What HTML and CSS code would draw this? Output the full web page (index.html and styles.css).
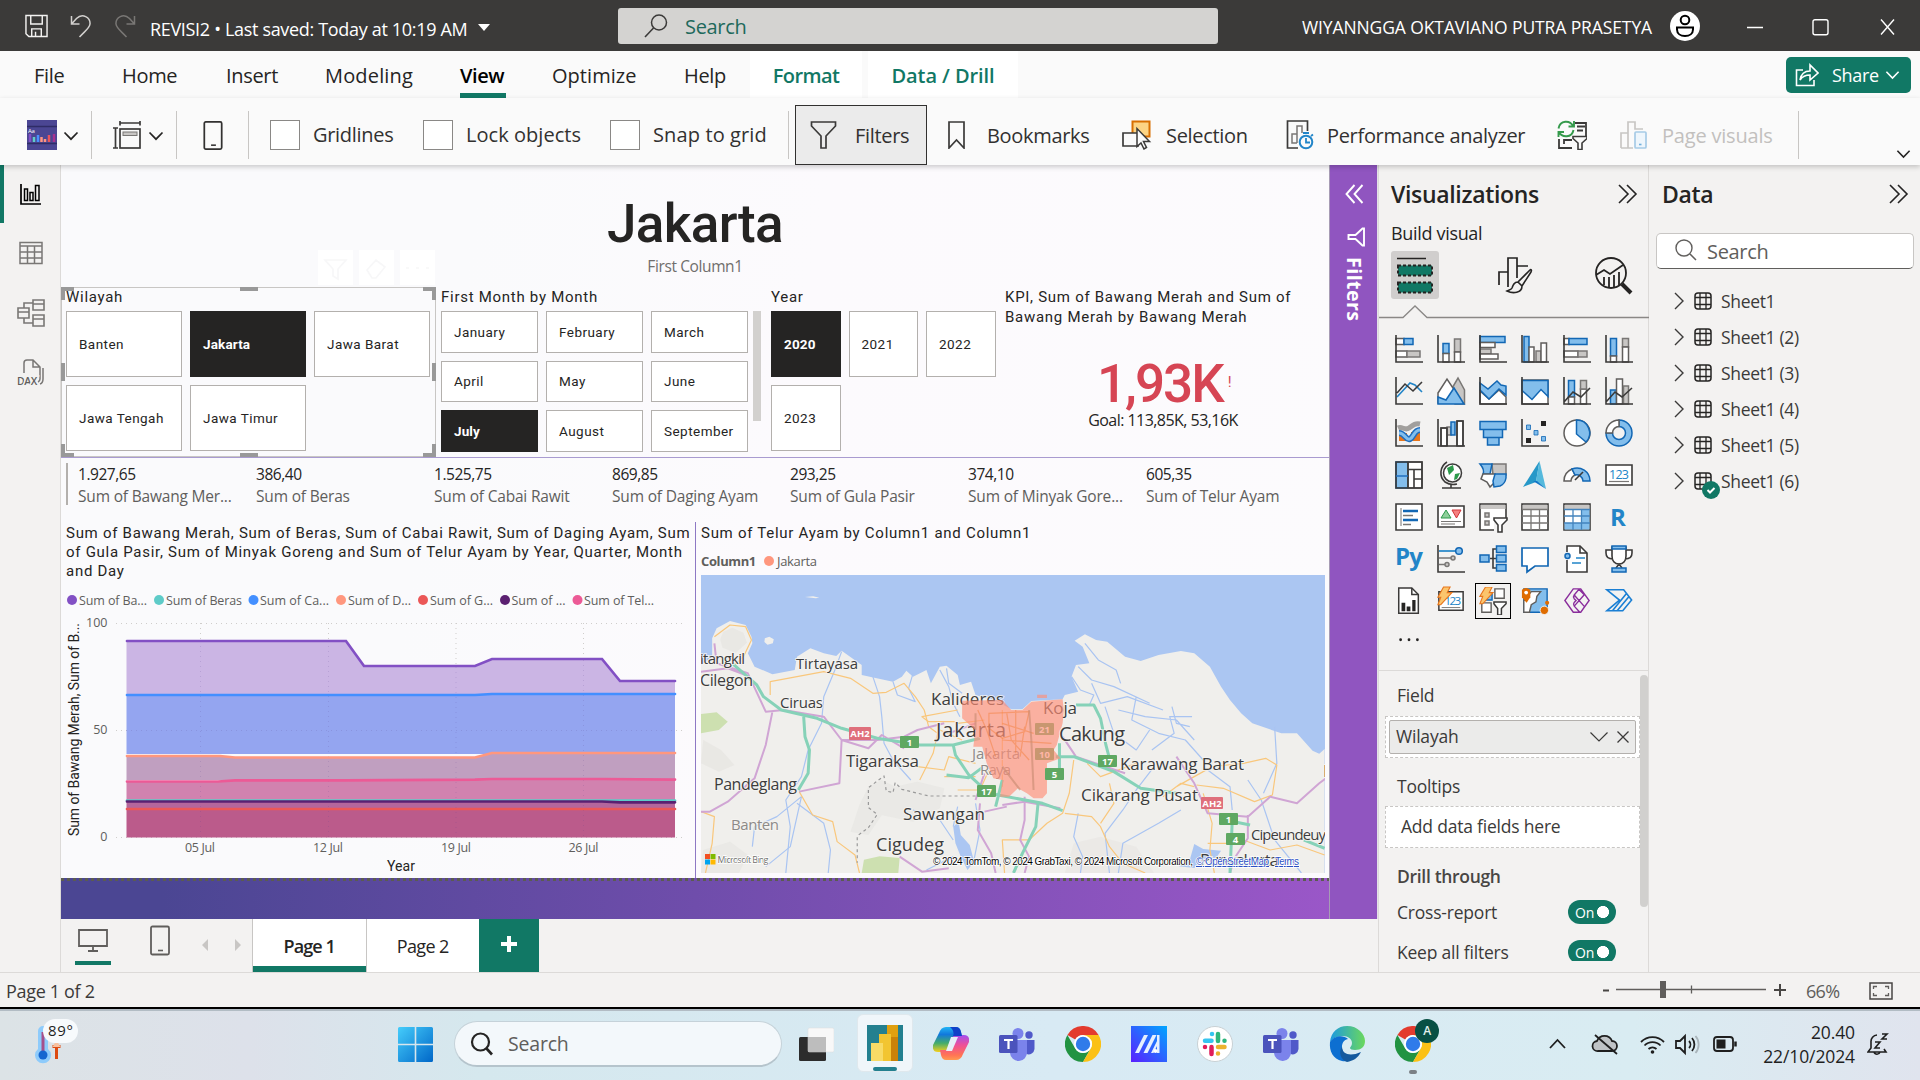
FILE: index.html
```html
<!DOCTYPE html>
<html lang="en">
<head>
<meta charset="utf-8">
<title>REVISI2 - Power BI Desktop</title>
<link rel="stylesheet" href="styles.css">
</head>
<body>
<svg class="defs" aria-hidden="true">
  <defs>
    <symbol id="chev-down" viewBox="0 0 16 10"><path d="M1.500 1.500L8 8.200l6.500-6.700" fill="none" stroke="currentColor" stroke-width="1.700"/></symbol>
    <symbol id="chev-right" viewBox="0 0 10 18"><path d="M1 1l8 8-8 8" fill="none" stroke="currentColor" stroke-width="1.400"/></symbol>
    <symbol id="double-right" viewBox="0 0 20 20"><path d="M1 1l9 9-9 9M9 1l9 9-9 9" fill="none" stroke="currentColor" stroke-width="1.600"/></symbol>
    <symbol id="phone" viewBox="0 0 20 30"><rect x="1" y="1" width="18" height="28" rx="1.500" fill="none" stroke="currentColor" stroke-width="1.800"/><path d="M8 25h5" stroke="currentColor" stroke-width="1.600"/></symbol>
    <symbol id="sheet" viewBox="0 0 18 18"><rect x="1" y="1" width="16" height="16" rx="3" fill="none" stroke="#252423" stroke-width="1.500"/><path d="M6 1v16M12 1v16M1 5.500h16M1 12.500h16" stroke="#252423" stroke-width="1.300"/></symbol>
    <symbol id="teams" viewBox="0 0 36 36"><circle cx="19" cy="7.500" r="5.500" fill="#7b83eb"/><circle cx="30" cy="9" r="3.700" fill="#5059c9"/><path d="M26 14h9.500v9a6 6 0 0 1-8 5z" fill="#5059c9"/><path d="M12 14h16v12a8 8 0 0 1-17 1z" fill="#7b83eb"/><rect x="0" y="9" width="18.500" height="18" rx="1.500" fill="#4b53bc"/><path d="M5 14h9M9.500 14v9" stroke="#fff" stroke-width="2.200"/></symbol>
    <symbol id="chrome" viewBox="0 0 36 36"><path d="M2.400 9A18 18 0 0 1 33.600 9H18a9 9 0 0 0-7.800 4.500z" fill="#e33b2e"/><path d="M2.400 9A18 18 0 0 0 18 36l7.800-13.500A9 9 0 0 1 10.200 22.500z" fill="#229342"/><path d="M33.600 9A18 18 0 0 1 18 36l7.800-13.500A9 9 0 0 0 25.800 13.500L18 9z" fill="#fbc116"/><circle cx="18" cy="18" r="9" fill="#fff"/><circle cx="18" cy="18" r="7.200" fill="#2f7bea"/></symbol>
    <linearGradient id="win" x1="0" y1="0" x2="1" y2="1"><stop offset="0" stop-color="#45cdfb"/><stop offset="1" stop-color="#0067c8"/></linearGradient>
    <linearGradient id="copA" x1="0" y1="0" x2="0" y2="1"><stop offset="0" stop-color="#22b4f5"/><stop offset=".3" stop-color="#1178dc"/><stop offset=".65" stop-color="#45ad6a"/><stop offset="1" stop-color="#f5cf1c"/></linearGradient>
    <linearGradient id="copB" x1="0" y1="0" x2="0" y2="1"><stop offset="0" stop-color="#ff9a50"/><stop offset=".2" stop-color="#ff7355"/><stop offset=".6" stop-color="#ee4f98"/><stop offset="1" stop-color="#a24ff0"/></linearGradient>
    <linearGradient id="maxiA" x1="0" y1="1" x2="1" y2="0"><stop offset="0" stop-color="#5a1fff"/><stop offset="1" stop-color="#00a6ff"/></linearGradient>
    <linearGradient id="edgeA" x1="0" y1="0" x2="1" y2="0"><stop offset="0" stop-color="#1c9ae0"/><stop offset="1" stop-color="#6bd85c"/></linearGradient>
  </defs>
</svg>

<header class="titlebar">
  <svg class="ico-save" viewBox="0 0 24 24"><path d="M1 1h22v22H4l-3-3zM6 1v9h12V1M7 23v-8h10v8M11 18v5" fill="none" stroke="#f3f2f1" stroke-width="1.500"/></svg>
  <svg class="ico-undo" viewBox="0 0 22 24"><path d="M1.500 2v8h8M1.500 10l5-5.500c6-6 14-1 13.500 5.500-.3 4-5 7-10.500 13" fill="none" stroke="#d2d0ce" stroke-width="1.500"/></svg>
  <svg class="ico-redo" viewBox="0 0 22 24"><path d="M20.500 2v8h-8M20.500 10l-5-5.500C9.500-1.500 1.500 3.500 2 10c.3 4 5 7 10.500 13" fill="none" stroke="#797775" stroke-width="1.500"/></svg>
  <span class="doc-name">REVISI2 • Last saved: Today at 10:19 AM</span>
  <i class="caret"></i>
  <div class="top-search">
    <svg viewBox="0 0 24 24"><circle cx="15" cy="8.500" r="7.500" fill="none" stroke="#3b3a39" stroke-width="1.500"/><path d="M9.500 14L1 23" stroke="#3b3a39" stroke-width="1.600"/></svg>
    <span>Search</span>
  </div>
  <span class="user">WIYANNGGA OKTAVIANO PUTRA PRASETYA</span>
  <svg class="avatar" viewBox="0 0 30 30"><circle cx="15" cy="15" r="15" fill="#fff"/><circle cx="15" cy="9" r="4.300" fill="none" stroke="#000" stroke-width="2"/><path d="M7 16.500h16v2c0 4-3.500 6.500-8 6.500s-8-2.500-8-6.500z" fill="none" stroke="#000" stroke-width="2"/></svg>
  <svg class="wbtns" viewBox="0 0 150 18"><path d="M0 9.500h16M134 1.500l13 15M147 1.500l-13 15" stroke="#fff" stroke-width="1.400"/><rect x="66" y="1.700" width="15" height="15" rx="2" fill="none" stroke="#fff" stroke-width="1.400"/></svg>
</header>

<nav class="tabs">
  <span class="t-file">File</span><span class="t-home">Home</span><span class="t-insert">Insert</span><span class="t-modeling">Modeling</span><span class="t-view">View</span><span class="t-optimize">Optimize</span><span class="t-help">Help</span>
  <span class="ctx ctx-format">Format</span><span class="ctx ctx-drill">Data / Drill</span>
  <div class="share">
    <svg class="share-ico" viewBox="0 0 24 24"><path d="M8 7H1.500v15.500H19V17M5 17c1-6 4-9 10-9V2l8 8-8 7v-5c-5 0-8 2-10 5z" fill="none" stroke="#fff" stroke-width="1.600"/></svg>
    <span>Share</span><svg class="chev-s"><use href="#chev-down"/></svg>
  </div>
</nav>

<div class="ribbon">
  <div class="rb rb-theme sep">
    <svg class="i30" viewBox="0 0 30 30"><path fill="#4b4693" d="M0 0h30v30H0z"/><path d="M0 6.500h30M0 23.500h30" stroke="#2f2c66" stroke-width="1.500"/><text x="1" y="13" class="aa">Aa</text><path d="M3 22v-8" stroke="#8250c8" stroke-width="2.500"/><path d="M7 22v-5" stroke="#61cdc9" stroke-width="2.500"/><path d="M11 22v-7" stroke="#4a90ff" stroke-width="2.500"/><path d="M14.500 22v-5M18 22v-3" stroke="#ff9480" stroke-width="2.500"/><path d="M22 22v-7" stroke="#e8565c" stroke-width="2.500"/><path d="M27 22v-8" stroke="#a83290" stroke-width="2.500"/></svg>
    <svg class="chev"><use href="#chev-down"/></svg>
  </div>
  <div class="rb rb-view sep">
    <svg class="i28" viewBox="0 0 28 28"><g fill="none" stroke="#3b3a39" stroke-width="1.700"><rect x="7" y="8" width="20" height="19"/><path d="M7 2h20M7 0v4.500M27 0v4.500M2.500 7v20M0 7h5M0 27h5"/></g><rect x="10" y="11" width="14" height="3.500" fill="#c8c6c4" stroke="#797775"/></svg>
    <svg class="chev"><use href="#chev-down"/></svg>
  </div>
  <div class="rb rb-phone sep"><svg class="phone-s"><use href="#phone"/></svg></div>
  <div class="rb rb-grid"><i class="cb"></i>Gridlines</div>
  <div class="rb rb-lock"><i class="cb"></i>Lock objects</div>
  <div class="rb rb-snap sep"><i class="cb"></i>Snap to grid</div>
  <div class="rb rb-filters"><svg class="i28" viewBox="0 0 28 28"><path d="M1.500 1h24v4L16 15v12h-5V15L1.500 5z" fill="none" stroke="#3b3a39" stroke-width="1.700"/></svg>Filters</div>
  <div class="rb rb-book"><svg class="i28" viewBox="0 0 28 28"><path d="M1 1h15v26l-7.500-8L1 27z" fill="none" stroke="#3b3a39" stroke-width="1.700"/></svg>Bookmarks</div>
  <div class="rb rb-sel"><svg class="i30" viewBox="0 0 30 30"><path d="M10.500 1.500h17v15h-17z" fill="#fcd484" stroke="#d86f00" stroke-width="2"/><path d="M1 13h15v13H1z" fill="#fafafa" stroke="#3b3a39" stroke-width="1.700"/><path d="M15 8.500v18l4-3.500 3 6 2.500-1.500-3-6h6z" fill="#fafafa" stroke="#3b3a39" stroke-width="1.500"/></svg>Selection</div>
  <div class="rb rb-perf"><svg class="i30" viewBox="0 0 30 30"><path d="M12 28H1.500V1h20v10" fill="none" stroke="#3b3a39" stroke-width="1.700"/><path d="M11 23H6V14h5M11 23V6h5v7" fill="none" stroke="#797775" stroke-width="1.500"/><circle cx="20" cy="22" r="6.300" fill="#fafafa" stroke="#2285c8" stroke-width="2"/><path d="M20 18v4.500h4M17 13h6M25 16l2-1.500" stroke="#2285c8" stroke-width="1.800" fill="none"/></svg>Performance analyzer</div>
  <div class="rb rb-refresh"><svg class="i30" viewBox="0 0 30 30"><path d="M18 3h11v14M20 6.500h8M20 10.500h6M2 19v9h13M7 24v-4h8" fill="none" stroke="#3b3a39" stroke-width="1.800"/><path d="M1.500 8.500C3 0 13 0 16 6M17 1v5.500h-5.500M16.500 10C15 18 5 18 2 12M1.500 17v-5H7" fill="none" stroke="#359a4c" stroke-width="1.900"/><path d="M16 16.500h14v2l-5 4.500v6.500h-4V23l-5-4.500z" fill="#fafafa" stroke="#3b3a39" stroke-width="1.600"/></svg></div>
  <div class="rb rb-visuals sep"><svg class="i28" viewBox="0 0 28 28"><path d="M1 27V12h7M8 27V1h7v7h8M1 27h12" fill="none" stroke="#c8c6c4" stroke-width="1.700"/><rect x="15" y="11" width="11" height="16" rx="1" fill="#eef6fc" stroke="#a6cbe6" stroke-width="1.700"/><path d="M19 23.500h2.500" stroke="#6fb0dc" stroke-width="1.600"/></svg>Page visuals</div>
  <svg class="rb-more"><use href="#chev-down"/></svg>
</div>

<main class="work">
  <aside class="rail">
    <div class="rail-i on"><svg viewBox="0 0 24 24"><path d="M2 2v20h20" stroke="#000" stroke-width="1.700" fill="none"/><path d="M5.500 18.500V7h3v11.500zM11 18.500v-8h3v8zM16.500 18.500V3.500h3.500v15z" fill="none" stroke="#000" stroke-width="1.500"/></svg></div>
    <div class="rail-i"><svg viewBox="0 0 24 24"><path d="M1 1.500h22v21H1zM1 5h22M1 11h22M1 17h22M8.500 5v17.500M15.500 5v17.500" fill="none" stroke="#797775" stroke-width="1.500"/></svg></div>
    <div class="rail-i"><svg class="w28" viewBox="0 0 28 28"><path d="M16 1h11v10H16zM16 5h11M16 16h11v11H16zM16 20h11M1 9h11v10H1zM1 13h11M7 9V4h9M7 19v5h9" fill="none" stroke="#797775" stroke-width="1.600"/></svg></div>
    <div class="rail-i"><svg class="w28" viewBox="0 0 28 28"><path d="M7 14V4q0-3 3-3h6l7 7v12q0 2-2 3M16 1v7h7M26 9v11q0 4-3 5" fill="none" stroke="#797775" stroke-width="1.500"/><text x="0" y="26" textLength="20" class="dax">DAX</text></svg></div>
  </aside>

  <section class="center">
    <div class="stage">
      <div class="canvas">
        <div class="headline"><h1>Jakarta</h1><p>First Column1</p></div>
        <div class="filters-row">
          <div class="slicer selected">
            <svg class="handles" viewBox="0 0 375 170"><rect x=".5" y=".5" width="374" height="169" fill="none" stroke="#c8c6c4"/><path d="M2 13V2h11M362 2h11v11M373 157v11h-11M13 168H2v-11" fill="none" stroke="#999" stroke-width="4"/><path d="M179 2h18M179 168h18M2 76v18M373 76v18" stroke="#999" stroke-width="4"/></svg>
            <svg class="vhead" viewBox="0 0 117 35"><path d="M0 0h35v35H0zM41 0h35v35H41zM82 0h35v35H82z" fill="#fff"/><path d="M7 10h21l-8 9v10l-5-3v-7zM49 20l9-10 9 7-9 11h-4zM88 18h3M98 18h3M108 18h3" fill="none" stroke="#f7f7f8" stroke-width="1.600"/></svg>
            <h2>Wilayah</h2>
            <div class="tiles wil"><b>Banten</b><b class="on">Jakarta</b><b>Jawa Barat</b><b>Jawa Tengah</b><b>Jawa Timur</b></div>
          </div>
          <div class="slicer month">
            <h2>First Month by Month</h2>
            <div class="month-row"><div class="tiles mon"><b>January</b><b>February</b><b>March</b><b>April</b><b>May</b><b>June</b><b class="on">July</b><b>August</b><b>September</b></div><i class="thumb"></i></div>
          </div>
          <div class="slicer year">
            <h2>Year</h2>
            <div class="tiles yr"><b class="on">2020</b><b>2021</b><b>2022</b><b>2023</b></div>
          </div>
          <div class="kpi">
            <h2>KPI, Sum of Bawang Merah and Sum of<br>Bawang Merah by Bawang Merah</h2>
            <div class="kpi-v">1,93K<small>!</small></div>
            <p>Goal: 113,85K, 53,16K</p>
          </div>
        </div>
        <div class="cards">
          <div><b>1.927,65</b><span>Sum of Bawang Mer...</span></div>
          <div><b>386,40</b><span>Sum of Beras</span></div>
          <div><b>1.525,75</b><span>Sum of Cabai Rawit</span></div>
          <div><b>869,85</b><span>Sum of Daging Ayam</span></div>
          <div><b>293,25</b><span>Sum of Gula Pasir</span></div>
          <div><b>374,10</b><span>Sum of Minyak Gore...</span></div>
          <div><b>605,35</b><span>Sum of Telur Ayam</span></div>
        </div>
        <div class="bottom">
          <div class="area">
            <h2>Sum of Bawang Merah, Sum of Beras, Sum of Cabai Rawit, Sum of Daging Ayam, Sum<br>of Gula Pasir, Sum of Minyak Goreng and Sum of Telur Ayam by Year, Quarter, Month<br>and Day</h2>
            <svg class="plot" viewBox="61 588 634 290">
              <g class="leg">
                <circle cx="72" cy="600" r="5" fill="#8250c4"/><text x="79" y="605" textLength="68">Sum of Ba...</text>
                <circle cx="159" cy="600" r="5" fill="#5ecbc8"/><text x="166" y="605" textLength="76">Sum of Beras</text>
                <circle cx="253.500" cy="600" r="5" fill="#438fff"/><text x="260" y="605" textLength="69">Sum of Ca...</text>
                <circle cx="341" cy="600" r="5" fill="#ff977e"/><text x="348" y="605" textLength="63">Sum of D...</text>
                <circle cx="423" cy="600" r="5" fill="#eb5757"/><text x="430" y="605" textLength="63">Sum of G...</text>
                <circle cx="505" cy="600" r="5" fill="#5b2071"/><text x="511.500" y="605" textLength="54">Sum of ...</text>
                <circle cx="577.500" cy="600" r="5" fill="#ec5a96"/><text x="584" y="605" textLength="70">Sum of Tel...</text>
              </g>
              <g stroke="#cfcdcb" stroke-dasharray="1 4"><path d="M116 623.500h566M116 730.500h566M116 837.500h566M200.500 623v214M328.500 623v214M456 623v214M583.500 623v214"/></g>
              <path d="M126.500 641H346l18 25H475l17-7H602l18 22h55V695H126.500z" fill="#c9b3e3" fill-opacity=".97"/>
              <path d="M126.500 695H475l17-1h183V754H126.500z" fill="#94a5f0"/>
              <path d="M126.500 756H220l15 1.500H475l17-4.500h183V780H126.500z" fill="#c09fc0"/>
              <path d="M126.500 781.500H218l17-1.500h440v22H126.500z" fill="#d182af"/>
              <path d="M126.500 801h548.500v9H126.500z" fill="#b4669c"/>
              <path d="M126.500 809h548.500v28.500H126.500z" fill="#bb5b8b"/>
              <g stroke="#5a3f8c" stroke-opacity=".17" stroke-dasharray="1 4"><path d="M126 730.500h549M200.500 641v196M328.500 641v196M456 667v170M583.500 660v177"/></g>
              <g fill="none" stroke-width="2.700" stroke-linecap="round">
                <path d="M127 641H346l18 25H475l17-7H602l18 22h55" stroke="#8250c4"/>
                <path d="M127 695H475l17-1h183" stroke="#438fff"/>
                <path d="M127 756H220l15 1.500H475l17-4.500h183" stroke="#ff977e"/>
                <path d="M127 781.500H218l17-1.200H345l130-.6 17-.7h110l73 .6" stroke="#ec5a96"/>
                <path d="M127 800.500h548" stroke="#5ecbc8"/>
                <path d="M127 801.500H602l18 .8h55" stroke="#5b2071"/>
                <path d="M127 809h548" stroke="#eb5757"/>
              </g>
              <g class="tick">
                <text x="107.500" y="627" text-anchor="end">100</text><text x="107.500" y="734" text-anchor="end">50</text><text x="107.500" y="841" text-anchor="end">0</text>
                <text x="185" y="852" textLength="30">05 Jul</text><text x="313" y="852" textLength="30">12 Jul</text><text x="441" y="852" textLength="30">19 Jul</text><text x="568.500" y="852" textLength="30">26 Jul</text>
              </g>
              <text class="axis" x="387" y="871" textLength="28">Year</text>
              <text class="axis" transform="translate(79 836) rotate(-90)" textLength="213">Sum of Bawang Merah, Sum of B...</text>
            </svg>
          </div>
          <div class="mapcol">
            <h2>Sum of Telur Ayam by Column1 and Column1</h2>
            <div class="maplegend"><b>Column1</b><i></i><span>Jakarta</span></div>
            <svg class="map" viewBox="0 0 624 298">
              <path fill="#abc6f2" d="M0 0h624v298H0z"/>
              <g transform="scale(.4464 .3333) translate(-25 -195)" fill="none" stroke-linejoin="round">
                <path fill="#f0efec" d="M25 465L50 440 50 385 60 355 90 333 125 345 138 380 140 400 130 430 145 470 185 493 235 480 240 440 270 415 300 430 328 438 340 422 385 465 385 495 455 515 475 500 485 482 500 500 530 480 540 520 560 470 575 467 600 495 605 525 630 515 640 555 690 575 720 598 745 598 765 573 835 568 840 555 870 545 855 500 865 465 895 460 880 410 862 392 885 373 910 390 935 395 975 440 1010 453 1050 435 1100 423 1130 430 1165 470 1190 530 1210 570 1235 610 1260 640 1325 670 1360 670 1395 722 1410 731 1422 717V1089H25z"/>
                <path fill="#f0efec" d="M168 385l10-5 10 8-2 12-12 4-7-8zM258 261l18-2 14 4-8 2z"/>
                <path fill="#cde0b0" d="M25 612l35-5 25 28-20 25-40 10zM385 1089l5-40 35-10 45 5-3 45z"/>
                <g fill="#e4e3df"><path d="M75 365l20-12 25 15 8 30-25 30-30-15-5-25zM30 690l40 30 30 45-35 20-40-25z" opacity=".6"/><path d="M400 830l30-20 30 20 50-15 60 20-10 60-60 40-70-20-30 60-40-10 20-80zM30 1020l60-25 40 40-20 54H25z" opacity=".5"/><path d="M860 1000l60-20 80 30 40 79H840z" opacity=".45"/></g>
                <g fill="#abc6f2"><path d="M590 950l12-15 5 40 20 30 10 50-15 25-15-40-12-40zM1130 1002l20 15 40 5-10 20-30 12-20 20-35-5 25-20z"/></g>
                <g class="thin" stroke="#a9c4f2">
                  <path d="M340 425L325 480 300 560 295 640 265 720 250 800 215 870 225 950 215 1089M410 500l15 60 5 60 5 80 20 50 40 60M455 515l10 40 40 20-15-40 10-45M560 480l20 50 10 50 15 40M575 475l5 45 30 30M250 860l-55 60-50 30-5 60M240 880l60 60 15 80-5 69"/>
                  <path d="M870 470l30 40 50 20 80 50M900 520l20 60 60-20 80 40M930 590l20 80 50 50 30-60M1000 560l-10 70 60 40 60 20 40 60M960 600l60 20 70 10 40 60M1080 590l10 50 30 10M855 500l20 40 30 15-10 30M885 400l30 50 40 30 10 40M1035 720l50-50-10-50 50 0"/>
                  <path d="M870 910l-10 70 20 60-5 49M1040 770l-40 70-30 60-40 70 10 119M1100 900l-50 40-80 60-10 89M1160 780l50 50 5 70M600 890l-10 60M1250 810l30 60 30 120 60 99M590 1040l-60 40M500 900l60 30 30 60M1310 650l5 110-30 90M250 860l-25 150-55 60M640 880l10 80-15 100"/>
                </g>
                <g class="thin" stroke="#f9c77c">
                  <path d="M55 380L90 345 125 350 138 390 120 440 100 465M180 555v-40l60-15 60-15 60 20 50 45 30-3 40-27 25 40 20 40 10 50 20 20-10 60-30 80M245 845l30 70 45 20 10 60 40 40 10 54M25 905l30 15-5 80-15 89"/>
                  <path d="M600 600l-80 20 15 15h60M600 640l60-10M560 660l50 30M640 760l-60-20-10 40-60-10M570 800h70M600 840h50l20-60M700 600v230M860 750l-10 100-15 60-35 30-40 50-60 0 5 99M840 910l60 10 20 30 20 60 30 50 50 29M920 940l30-60-10-60M1060 860l40-40 30 10M1090 830l80-60 70-10 50-15 25 20-10 90-40 20-70-40-60-10M1150 850l20 90-5 80 10 69M1240 990l60 30 60-15 62 30M1160 1000h80M1000 760l-80 40-30-40"/>
                </g>
                <g class="mid" stroke="#d0a5d4">
                  <path d="M55 400l5 60 70 30 40 115 40-5 90 20 40 70 80 0 60-10 30-20 60-20M25 485l60-10 40 20M185 605l-15 100-25 100-60 70-40 30H25M340 690l-5 130-90 25M340 690l60 25 30-40 50 40M640 870l20-80M650 880l-5 80 30 70 10 59M700 885l50-10 80 20M750 860v70l-10 60 20 50-10 49M835 680l30 60 110 50M1090 740l40 80 30 90 90 10 50-60 60 20 50-60 20-20M1250 915v70l-30 60-10 44M660 905l50-15M640 640l-60 30M470 1040l50 45 60-10"/>
                </g>
                <g class="wide" stroke="#86d2b8">
                  <path d="M95 460l55 65 15 35 40 40 80 25 55 30 80 30 95 20h75l60-20M255 620l3 60 10 40-3 70-22 50M590 705l5 30 30 60 45 55 120 30 45 22M780 880l-5 70-30 80-20 59M820 740h40l90 45 60 50 80 15M865 585l40 0 15 40 12 80 8 40M575 795l50 8 30-30M700 810l-15 80M828 700v90M1200 930l55 15M1215 935l-5 154M1375 990l47 25"/>
                </g>
                <path class="thin" stroke="#999" stroke-dasharray="3 3" d="M640 858H535l-60-20-15-20-5 30-15-5-5-45-35 35v60l20 20-20 40-25 25v80"/>
              </g>
              <g class="city">
                <text x="-1" y="89" textLength="45" font-size="15">itangkil</text><text x="-1" y="111" textLength="53" font-size="16">Cilegon</text><text x="95" y="94" textLength="62" font-size="15">Tirtayasa</text><text x="79" y="133" textLength="43" font-size="15">Ciruas</text><text x="230" y="130" textLength="73" font-size="17">Kalideres</text><text x="342" y="139" textLength="34" font-size="17">Koja</text><text x="235" y="162" textLength="70" font-size="20">Jakarta</text>
                <text class="prov" x="271" y="184" textLength="48">Jakarta</text><text class="prov" x="279" y="200" textLength="31">Raya</text>
              </g>
              <g class="shield">
                <rect x="334" y="148" width="19" height="12" rx="1"/><text x="343.500" y="158">21</text>
                <rect x="334" y="173" width="19" height="12" rx="1"/><text x="343.500" y="183">10</text>
              </g>
              <g transform="scale(.4464 .3333) translate(-25 -195)">
                <path fill="#ff8e78" fill-opacity=".66" d="M610 572L700 570 720 600 745 600 765 575 835 568 838 600 835 640 822 705 815 720 830 745 800 760 800 850 790 865 770 865 755 850 735 835 715 860 695 860 700 810 680 805 665 760 655 710 635 710 640 660 610 625zM778 554h22v10h-22z"/>
                <g class="thin" fill="none" stroke="#f5813f" opacity=".5"><path d="M645 600l20 60 20 80M670 610l90-5-10 60-50 20-30-30zM710 610l10 80 40 60M730 600l0 130M700 640l70 30M700 690l110 10M750 650l-10 90"/></g>
                <g class="mid" fill="none" stroke="#c88a70" opacity=".6"><path d="M640 610v50M760 600l5 90 5 150M700 770l40 70"/></g>
              </g>
              <g class="city">
                <text x="358" y="166" textLength="66" font-size="20">Cakung</text><text x="145" y="192" textLength="73" font-size="17">Tigaraksa</text><text x="419" y="195" textLength="124" font-size="17">Karawang Barat</text><text x="380" y="226" textLength="117" font-size="17">Cikarang Pusat</text><text x="13" y="215" textLength="83" font-size="16">Pandeglang</text><text class="prov" x="30" y="255" textLength="48">Banten</text><text x="202" y="245" textLength="82" font-size="17">Sawangan</text><text x="175" y="276" textLength="68" font-size="18">Cigudeg</text><text x="550" y="265" textLength="75" font-size="15">Cipeundeuy</text><text x="499" y="291" textLength="79" font-size="17">Purwakarta</text><text x="622" y="202" font-size="17">K</text>
              </g>
              <g class="shield">
                <rect class="red" x="148" y="152" width="22" height="13" rx="1"/><text x="159" y="162">AH2</text>
                <rect x="199" y="161" width="19" height="12" rx="1"/><text x="208.500" y="171">1</text>
                <rect x="276" y="210" width="19" height="12" rx="1"/><text x="285.500" y="220">17</text>
                <rect x="344" y="193" width="19" height="12" rx="1"/><text x="353.500" y="203">5</text>
                <rect x="397" y="180" width="19" height="12" rx="1"/><text x="406.500" y="190">17</text>
                <rect class="red" x="500" y="222" width="22" height="12" rx="1"/><text x="511" y="232">AH2</text>
                <rect x="518" y="238" width="19" height="12" rx="1"/><text x="527.500" y="248">1</text>
                <rect x="525" y="258" width="19" height="12" rx="1"/><text x="534.500" y="268">4</text>
              </g>
              <path fill="#f25022" d="M4 279h5v5H4z"/><path fill="#7fba00" d="M9.500 279h5v5h-5z"/><path fill="#00a4ef" d="M4 284.500h5v5H4z"/><path fill="#ffb900" d="M9.500 284.500h5v5h-5z"/>
              <text class="bing" x="16.500" y="288" textLength="51">Microsoft Bing</text>
              <g class="credit"><text x="232" y="290" textLength="260">© 2024 TomTom, © 2024 GrabTaxi, © 2024 Microsoft Corporation,</text><text class="lnk" x="495" y="290" textLength="73">© OpenStreetMap</text><text class="lnk" x="574" y="290" textLength="24">Terms</text></g>
            </svg>
          </div>
        </div>
        <div class="band"></div>
      </div>
      <div class="filterpane">
        <svg class="dl" viewBox="0 0 20 20"><path d="M10.500 1l-8 9 8 9M18.500 1l-8 9 8 9" fill="none" stroke="#fff" stroke-width="1.900"/></svg>
        <svg class="fn" viewBox="0 0 20 20"><path d="M18 1.500v17h-1.500L9.500 12H2.500V8h7l7-6.500z" fill="none" stroke="#fff" stroke-width="1.900"/></svg>
        <span>Filters</span>
      </div>
    </div>
    <div class="pagebar">
      <div class="dev on"><svg viewBox="0 0 30 24"><path d="M1 1h28v16H1zM15 17v5M10 22h10" fill="none" stroke="#605e5c" stroke-width="1.800"/></svg></div>
      <div class="dev-phone"><svg class="phone-m"><use href="#phone"/></svg></div>
      <svg class="arrows" viewBox="0 0 40 12"><path d="M6 0v12L0 6zM33 0v12l6-6z" fill="#c8c6c4"/></svg>
      <span class="ptab on">Page 1</span><span class="ptab">Page 2</span>
      <span class="padd"><svg viewBox="0 0 16 16"><path d="M8 0v16M0 8h16" stroke="#fff" stroke-width="4"/></svg></span>
    </div>
  </section>

  <aside class="viz">
    <header><h3>Visualizations</h3><svg class="dr"><use href="#double-right"/></svg></header>
    <p class="build">Build visual</p>
    <div class="vtabs">
      <svg class="vt on" viewBox="0 0 48 48"><path d="M6 7.500h29" stroke="#252423" stroke-width="1.700"/><path d="M7 14.500h34v10H7zM7 31.500h34v10H7z" fill="#117865" stroke="#252423" stroke-width="2" stroke-dasharray="3 2"/></svg>
      <svg class="vt mid-t" viewBox="0 0 48 48"><path d="M5 34V21h9M14 36V7h9v20M23 15h9M30 15h4" fill="none" stroke="#252423" stroke-width="1.700"/><path d="M36 19L24 31l4 4 9-14c1-2 0-3-1-2zM24 31c-4 0-5 3-6 6-1 2-3 2-5 3 6 3 15 2 15-5z" fill="#f3f2f1" stroke="#252423" stroke-width="1.600"/></svg>
      <svg class="vt" viewBox="0 0 48 48"><circle cx="21" cy="22" r="15" fill="none" stroke="#252423" stroke-width="1.800"/><path d="M6 24l8-5 6 4 13-9M14 34V26M19 36V26M24 36V24M29 34V21" fill="none" stroke="#252423" stroke-width="1.800"/><path d="M32 33l9 9" stroke="#252423" stroke-width="4"/></svg>
    </div>
    <svg class="notch" viewBox="0 0 270 14"><path d="M0 12.500h24L36 1l12 11.500h222" fill="none" stroke="#8a8886" stroke-width="1.300"/></svg>
    <div class="vgrid">
      <svg viewBox="0 0 28 28"><path class="w" d="M1 3.500h8v6H1z"/><path class="b" d="M9 3.500h9v6H9z"/><path class="w" d="M1 16h11v6H1z"/><path class="g" d="M12 16h13v6H12z"/><path class="ax" d="M1 0v27h27"/></svg>
      <svg viewBox="0 0 28 28"><path class="b" d="M6 8.500h6v10H6z"/><path class="w" d="M6 18.500h6V27H6z"/><path class="g" d="M17.500 4h6v13h-6z"/><path class="w" d="M17.500 17h6v10h-6z"/><path class="ax" d="M1 0v27h27"/></svg>
      <svg viewBox="0 0 28 28"><path class="b" d="M1 1.500h25v6H1z"/><path class="w" d="M1 7.500h15v5H1z"/><path class="g" d="M1 14h11v5H1z"/><path class="w" d="M1 19h18v5H1z"/><path class="ax" d="M1 0v27h27"/></svg>
      <svg viewBox="0 0 28 28"><path class="b" d="M3 1.500h5V27H3z"/><path class="w" d="M8 12h5v15H8z"/><path class="g" d="M15 16h5v11h-5z"/><path class="w" d="M20 8h5.500v19H20z"/><path class="ax" d="M1 0v27h27"/></svg>
      <svg viewBox="0 0 28 28"><path class="w" d="M1 3.500h5v6H1z"/><path class="b" d="M6 3.500h18v6H6z"/><path class="w" d="M1 16h14v6H1z"/><path class="g" d="M15 16h9v6h-9z"/><path class="ax" d="M1 0v27h27"/></svg>
      <svg viewBox="0 0 28 28"><path class="b" d="M5.500 3.500h6V21h-6z"/><path class="w" d="M5.500 21h6v6h-6z"/><path class="g" d="M17.500 3.500h6V12h-6z"/><path class="w" d="M17.500 12h6v15h-6z"/><path class="ax" d="M1 0v27h27"/></svg>

      <svg viewBox="0 0 28 28"><path d="M2 20L15 6l5 2 7 7" fill="none" stroke="#2285c8" stroke-width="1.600"/><path class="ax" d="M1 0v27h27M2 16l8-9 8 7 9-9"/></svg>
      <svg viewBox="0 0 28 28"><path class="g" d="M14 13l7-12 6.500 12v14H18z"/><path class="w" d="M1 16L10 2l8 12-8 12H1z"/><path class="b" d="M1 20l8 3 8-12 10 16H1z"/></svg>
      <svg viewBox="0 0 28 28"><path class="w" d="M1 14l9 8 10-9 7 7v7H1z" stroke="none"/><path class="b" d="M1 6l8 6 9-8 4 4 5 1v9l-7-6-10 10-9-9z"/><path class="ax" d="M1 0v27h27"/></svg>
      <svg viewBox="0 0 28 28"><path class="w" d="M1 3h26v24H1z" stroke="none"/><path class="b" d="M1 3.500h26v16l-7-7-9 10-10-9z"/><path class="ax" d="M1 0v27h27"/></svg>
      <svg viewBox="0 0 28 28"><path class="b" d="M5.500 3.500h6V20h-6z"/><path class="w" d="M5.500 20h6v7h-6zM17.500 12h6v15h-6z"/><path class="g" d="M17.500 3.500h6V12h-6z"/><path class="ax" d="M1 0v27h27M1 25l9-10 8 5 9-9"/></svg>
      <svg viewBox="0 0 28 28"><path class="b" d="M5.500 13h6v14h-6z"/><path class="w" d="M11.500 2h6v25h-6z"/><path class="g" d="M18.500 9h5v18h-5z"/><path class="ax" d="M1 0v27h27M1 25l9-10 7 5 10-9"/></svg>

      <svg viewBox="0 0 28 28"><path d="M4 14h8v8H4zM16 13h9v9h-9z" fill="#e8761c"/><path d="M3 9c4-2 7 3 11 0s6-5 11-4" fill="none" stroke="#a19f9d" stroke-width="5"/><path d="M4 14c6 0 7 8 11 6s4-9 10-9" fill="none" stroke="#1f6fc0" stroke-width="6"/><path d="M4 14c6 0 7 8 11 6s4-9 10-9" fill="none" stroke="#83beec" stroke-width="3"/><path class="ax" d="M1 0v27h27"/></svg>
      <svg viewBox="0 0 28 28"><path class="w" d="M4 9h6v18H4zM20 2h6v25h-6z"/><path class="g" d="M10 8h4v8h-4z"/><path class="b" d="M14 3h4v13h-4z"/><path class="ax" d="M1 0v27h27M4 27V9h6v18M20 27V2h6v25"/></svg>
      <svg viewBox="0 0 28 28"><path class="b" d="M1 2.500h26v8H1zM4.500 10.500h19v8h-19zM8.500 18.500H20V26H8.500z"/></svg>
      <svg viewBox="0 0 28 28"><path d="M5.500 6h4v4.500h-4zM13 11.500h4V16h-4zM20.500 17.500h4V22h-4z" class="b thinb"/><path d="M20 2h5v5h-5zM5 19h5v5H5z" fill="#252423"/><path class="ax" d="M1 0v27h27"/></svg>
      <svg viewBox="0 0 28 28"><circle class="w" cx="14" cy="14" r="13"/><path class="b" d="M13.500 1A13 13 0 0 1 23 23l-9.500-8z"/></svg>
      <svg viewBox="0 0 28 28"><path class="b" d="M14 1A13 13 0 1 1 1 14h6.500A6.500 6.500 0 1 0 14 7.500z"/><path class="w" d="M1 14A13 13 0 0 1 14 1v6.500A6.500 6.500 0 0 0 7.500 14z"/></svg>

      <svg viewBox="0 0 28 28"><path class="b" d="M1 1h12v26H1z"/><path class="w" d="M13 1h14v26H13z"/><path class="ax" d="M1 1h26v26H1zM13 1v26M13 8.500h14M19 8.500V27M19 18h8"/><path d="M1 15h12" stroke="#1f6fc0" stroke-width="1.500"/></svg>
      <svg viewBox="0 0 28 28"><circle cx="15.500" cy="12" r="9" fill="#fff" stroke="#3b3a39" stroke-width="1.500"/><path d="M10 7l6-3 1 5-5 5zM18 13l5-1-3 6-3 1z" fill="#2c9a4b"/><path class="ax" d="M10 1A12.500 12.500 0 0 0 8 21c3 2 8 3 12 2M14 23v4M5 27h19"/></svg>
      <svg viewBox="0 0 28 28"><path class="g" d="M13 3h14v11H14z"/><path class="b" d="M1 3h12l-2 10H4q2-4-3-10z"/><path class="w" d="M4 13h12v8l-5 5-3-5-6-3z"/><path class="b" d="M16 13h11v4q-1 6-6 8l-6 1-1-6z"/></svg>
      <svg viewBox="0 0 28 28"><path fill="#2698c8" d="M18.500 0L2 26l13-5z"/><path fill="#55b9dc" d="M18.500 0L25 28l-10-8z"/><path fill="#1276c8" d="M12 20l4 0 9 8z"/></svg>
      <svg viewBox="0 0 28 28"><path class="w" d="M1 20a13 13 0 0 1 8-12l3 6a7 7 0 0 0-4 6z"/><path class="b" d="M9 8a13 13 0 0 1 18 12h-7a6.500 6.500 0 0 0-8-6z"/><path class="ax" d="M12 19l8-8" stroke-width="3"/></svg>
      <svg viewBox="0 0 28 28"><path class="ax wf" d="M1 4h26v20H1z"/><text x="4" y="18" textLength="20" class="t123">123</text><path d="M4 20.500h20" stroke="#797775" stroke-width="1.200"/></svg>

      <svg viewBox="0 0 28 28"><path class="ax wf" d="M1 1h26v26H1z"/><path d="M6 5v18" stroke="#797775"/><path d="M8 8h15M8 17h15" stroke="#1267b4" stroke-width="2.500"/><path d="M8 12.500h10M8 21.500h8" stroke="#797775" stroke-width="1.300"/></svg>
      <svg viewBox="0 0 28 28"><path class="ax wf" d="M1 3h26v21H1z"/><path d="M4 15l5-8 5 8z" fill="#8ecf9a" stroke="#2c9a4b"/><path d="M15 7h9l-4.500 8z" fill="#f58080" stroke="#d13438"/><path d="M4 18.500h20M4 21h14" stroke="#797775" stroke-width="1.200"/></svg>
      <svg viewBox="0 0 28 28"><path class="ax wf" d="M1 1h26v26H1z"/><path d="M1.500 2h25v4h-25z" fill="#c8c6c4"/><path class="g" d="M6 10h4v4H6zM6 18h4v4H6z"/><path d="M15 15h13v13H15z" fill="#f3f2f1"/><path class="ax wf" d="M15 15h13v2l-5 5v7h-4v-7l-4-5z"/></svg>
      <svg viewBox="0 0 28 28"><path class="ax wf" d="M1 1h26v26H1z"/><path d="M1.500 2h25v4h-25z" fill="#c8c6c4"/><path d="M1 6.500h26M1 13h26M1 20h26M10 6v21M18.500 6v21" stroke="#797775" stroke-width="1.300"/></svg>
      <svg viewBox="0 0 28 28"><path class="ax wf" d="M1 1h26v26H1z"/><path d="M1.500 2h25v4h-25z" fill="#c8c6c4"/><path d="M18 6.500h8.500v20h-25V20H18z" fill="#83beec"/><path d="M1 6.500h26M1 13h26M1 20h26M10 6v21M18.500 6v21" stroke="#4484bd" stroke-width="1.300"/></svg>
      <svg viewBox="0 0 28 28"><text x="5" y="23" class="big" textLength="14">R</text></svg>

      <svg viewBox="0 0 28 28"><text x="0" y="20" class="big" textLength="28">Py</text></svg>
      <svg viewBox="0 0 28 28"><path d="M2 6h17" stroke="#2285c8" stroke-width="1.700"/><circle class="b" cx="22" cy="6" r="3.300"/><path d="M2 13h12M2 19.500h6" stroke="#797775" stroke-width="1.600"/><circle class="g" cx="16" cy="13" r="2"/><circle class="g" cx="10" cy="19.500" r="2"/><path class="ax" d="M1 0v27h27"/></svg>
      <svg viewBox="0 0 28 28"><path class="ax" d="M11 13.500h6M18 4h-4v19h4"/><path class="b" d="M1 10h9v7H1zM17.500 1H27v6.500h-9.500zM17.500 10H27v7h-9.500zM17.500 19.500H27V26h-9.500z"/></svg>
      <svg viewBox="0 0 28 28"><path d="M1 3h26v18H14l-8 6v-6H1z" fill="#fff" stroke="#1267b4" stroke-width="1.700"/></svg>
      <svg viewBox="0 0 28 28"><path class="ax wf" d="M4 1h13l7 7v19H4z"/><path class="ax" d="M17 1v7h7"/><path d="M2 7h5v8H2z" fill="#f3f2f1"/><path d="M13 13h9M9 18h9" stroke="#2285c8" stroke-width="1.500"/><circle class="b" cx="4.500" cy="11" r="2.500"/></svg>
      <svg viewBox="0 0 28 28"><path class="ax wf" d="M7 2h14v9c0 5-3 8-7 8s-7-3-7-8zM7 5H1v3c0 4 3 6 7 6M21 5h6v3c0 4-3 6-7 6M11 23l3-4 3 4"/><path class="b" d="M7 1h14v3H7zM7 23h14v4H7z"/></svg>

      <svg viewBox="0 0 28 30"><path class="ax wf" d="M3 1h14l7 7v20H3z"/><path class="ax" d="M17 1v7h7"/><path d="M6 17h4v9H6zM11.500 21h4v5h-4zM17.500 14h3.500v12h-3.500z" fill="#252423"/></svg>
      <svg viewBox="0 0 28 30"><path class="ax wf" d="M1 5h26v20H1z"/><text x="7" y="19" textLength="18" class="t123">123</text><path d="M4 22h20" stroke="#797775"/><path d="M6 0h7l-3 6h5L3 19H0l3-8H0z" fill="#fbc56d" stroke="#e8761c" stroke-width="1.200"/></svg>
      <div class="pick"><svg viewBox="0 0 28 30"><path class="w" d="M16 2h10v10H16zM2 17h10v10H2z"/><path class="b" d="M7 6h6v8H5z"/><path d="M6 0h7l-3 6h4L3 18H0l3-8H0z" fill="#fbc56d" stroke="#e8761c" stroke-width="1.200"/><path class="ax wf" d="M15 16h13v2l-5 5v7h-4v-7l-4-5z"/></svg></div>
      <svg viewBox="0 0 28 30"><path class="b" d="M2 2h25v25H2z"/><path class="w" d="M2 15l8-10h10l-4 5-1 6-5 3-2 8H2z"/><path d="M0 3q4-4 9 0v8l-4 6-5-6z" fill="#df6c00"/><circle cx="4.500" cy="6" r="2" fill="#fff"/><circle cx="24" cy="25" r="4.500" fill="#df6c00" stroke="#f3f2f1"/><circle cx="27" cy="17" r="2.200" fill="#df6c00"/></svg>
      <svg viewBox="0 0 28 30"><path d="M10 2h8l9 12.500L18 27h-8L1 14.500zM11 8.500l5-6M11 8.500l11 12.500M17 27L11 20.500M11 20.500l11-12.500M16 2.500l6 6M11 8.500q-1.500 2 0 4l2 2-2 2q-1.500 2 0 4" fill="none" stroke="#8a2d9c" stroke-width="1.500"/></svg>
      <svg viewBox="0 0 28 30"><path d="M1 3h18l8.500 11L18 25.500H1L14.500 14zM1 3l13.500 11M7 25.500L22 7M12 25.500L25 10" fill="none" stroke="#1a7fd4" stroke-width="1.700"/></svg>
      <svg viewBox="0 0 28 30"><path d="M5 11.500h.01M14 11.500h.01M23 11.500h.01" stroke="#252423" stroke-width="3" stroke-linecap="round"/></svg>
    </div>
    <div class="wells">
      <div class="well-list">
        <p>Field</p>
        <div class="well"><div class="pill"><span>Wilayah</span><svg class="pd" viewBox="0 0 18 10"><path d="M.5.5L9 9 17.500.5" fill="none" stroke="#3b3a39" stroke-width="1.200"/></svg><svg class="px" viewBox="0 0 12 12"><path d="M.5.5l11 11M11.500.5l-11 11" stroke="#3b3a39" stroke-width="1.300"/></svg></div></div>
        <p class="tt">Tooltips</p>
        <div class="well add">Add data fields here</div>
        <p class="drill">Drill through</p>
        <div class="tog-row"><span>Cross-report</span><i class="tog">On</i></div>
        <div class="tog-row"><span>Keep all filters</span><i class="tog">On</i></div>
      </div>
      <i class="scroll"></i>
    </div>
  </aside>

  <aside class="data">
    <header><h3>Data</h3><svg class="dr"><use href="#double-right"/></svg></header>
    <div class="dsearch"><svg viewBox="0 0 22 22"><circle cx="9" cy="9" r="8" fill="none" stroke="#605e5c" stroke-width="1.400"/><path d="M15 15l6 6" stroke="#605e5c" stroke-width="1.500"/></svg>Search</div>
    <ul>
      <li><svg class="cr"><use href="#chev-right"/></svg><svg class="sh"><use href="#sheet"/></svg>Sheet1</li>
      <li><svg class="cr"><use href="#chev-right"/></svg><svg class="sh"><use href="#sheet"/></svg>Sheet1 (2)</li>
      <li><svg class="cr"><use href="#chev-right"/></svg><svg class="sh"><use href="#sheet"/></svg>Sheet1 (3)</li>
      <li><svg class="cr"><use href="#chev-right"/></svg><svg class="sh"><use href="#sheet"/></svg>Sheet1 (4)</li>
      <li><svg class="cr"><use href="#chev-right"/></svg><svg class="sh"><use href="#sheet"/></svg>Sheet1 (5)</li>
      <li><svg class="cr"><use href="#chev-right"/></svg><svg class="sh"><use href="#sheet"/></svg>Sheet1 (6)<svg class="ok" viewBox="0 0 18 18"><circle cx="9" cy="9" r="9" fill="#117865"/><path d="M5.500 9l2.500 2.500 4.500-4.500" fill="none" stroke="#fff" stroke-width="2"/></svg></li>
    </ul>
  </aside>
</main>

<footer class="status">
  <span>Page 1 of 2</span>
  <svg class="zoom" viewBox="0 0 184 18"><path d="M0 9.500h6M171 9h12M177 3v12" stroke="#484644" stroke-width="2"/><path d="M13 8.500h150M88.500 4.500v8" stroke="#605e5c" stroke-width="1.300"/><path d="M57 0h6v17h-6z" fill="#605e5c"/></svg>
  <span class="pct">66%</span>
  <svg class="fit" viewBox="0 0 24 18"><path d="M1 1h22v16H1z" fill="none" stroke="#484644" stroke-width="1.500"/><path d="M4.500 7V4.500H8M16 4.500h3.500V7M19.500 11v2.500H16M8 13.500H4.500V11" fill="none" stroke="#605e5c" stroke-width="1.300"/></svg>
</footer>

<footer class="taskbar">
  <div class="weather">
    <svg viewBox="0 0 46 46"><path d="M4 13a5 5 0 0 1 10 0v18a8 8 0 1 1-10 0z" fill="#8ecbfb"/><path d="M9 14v24" stroke="#a5508c" stroke-width="3"/><circle cx="9" cy="37" r="4.500" fill="#1566d0"/><path d="M22.500 41V28M18.500 28.500h8" stroke="#dd4a12" stroke-width="3"/><path d="M22.500 22l4 7h-8z" fill="#f7c1a0"/><rect x="9" y="1" width="35" height="24" rx="12" fill="#f7fafc"/><text x="14" y="18" textLength="25" class="deg">89°</text></svg>
  </div>
  <svg class="start" viewBox="0 0 35 35"><path fill="url(#win)" d="M0 1.500A1.500 1.500 0 0 1 1.500 0H16.700v16.700H0zM18.300 0H33.500A1.500 1.500 0 0 1 35 1.500V16.700H18.300zM0 18.300H16.700V35H1.500A1.500 1.500 0 0 1 0 33.500zM18.300 18.300H35V33.500A1.500 1.500 0 0 1 33.500 35H18.300z"/></svg>
  <div class="tsearch"><svg viewBox="0 0 24 24"><circle cx="10.500" cy="10" r="8.500" fill="none" stroke="#252423" stroke-width="2.200"/><path d="M16.500 16.500L22 22.500" stroke="#252423" stroke-width="2.600"/></svg>Search</div>
  <div class="apps">
    <span><svg viewBox="0 0 36 36"><rect x="1" y="11" width="27" height="24" rx="1.500" fill="#2c2c2c"/><rect x="10" y="2" width="26" height="24" rx="1.500" fill="#f8f8f8" stroke="#ddd" stroke-width=".5"/><path d="M10 11h18v15H10z" fill="#bdbdbd"/></svg></span>
    <span class="act"><svg viewBox="0 0 36 36"><path fill="#24808f" d="M0 0h36v36H0z"/><path fill="#e0a010" d="M20 0h11v36H20z"/><path fill="#c98208" d="M24 12h7v24h-7z"/><path fill="#f2c531" d="M12 9h12v27H12z"/><path fill="#f8db66" d="M4 18h12v18H4z"/></svg></span>
    <span><svg viewBox="0 0 36 36"><path d="M6 7q2-6 7-6h10q4 0 5 5l1 5h-5q-4 0-5 4l-2 7q-1 4-5 4H5q-6 0-5-7z" fill="url(#copA)"/><path d="M6 7q2-6 7-6h10q4 0 5 5l1 5h-5q-4 0-5 4l-2 7q-1 4-5 4H5q-6 0-5-7z" transform="rotate(180 18 17.500)" fill="url(#copB)"/><path d="M17 1h6q4 0 5 5l1 4h-9q2-5-3-9z" fill="#0f40c8"/><path d="M18 11h7l-6 14h-6z" fill="#e6eff8"/></svg></span>
    <span><svg><use href="#teams"/></svg></span>
    <span><svg><use href="#chrome"/></svg></span>
    <span><svg viewBox="0 0 36 36"><path fill="url(#maxiA)" d="M0 0h36v36H0z"/><path d="M4 27h4l9-18h-4zM12.500 27h4l9-18h-4zM26 9h2.500v18H26zM20 27l6-12v5l-3.500 7z" fill="#e5f0ff"/><circle cx="24.500" cy="25" r="1.900" fill="#fff"/></svg></span>
    <span><svg viewBox="0 0 36 36"><circle cx="18" cy="18" r="17.500" fill="#fff" stroke="#c8d0d4"/><g stroke-width="4.500" stroke-linecap="round"><path d="M15 8h.01M8 14.700h6.500" stroke="#36c5f0"/><path d="M21 8v7M27.500 14.700h.01" stroke="#2eb67d"/><path d="M21 27.500h.01M21 21h6.500" stroke="#ecb22e"/><path d="M14.500 21v7M8 21h.01" stroke="#e01e5a"/></g></svg></span>
    <span><svg><use href="#teams"/></svg></span>
    <span><svg viewBox="0 0 36 36"><path d="M1 16C2 6 9 0 18 0c11 0 18 8 18 15 0 6-4 9-10 9-3 0-5-1-5-2s2-2 2-5c0-4-4-7-9-7-7 0-12 4-13 6z" fill="url(#edgeA)"/><path d="M1 16c3-6 13-8 18-3-5 1-6 5-6 8 0 6 6 11 12 9-3 4-8 6-12 5C4 33 0 25 1 16z" fill="#0d6fd1"/><path d="M13 21c0 7 8 10 19 5-3 6-8 9-14 10-6-2-9-10-5-15z" fill="#155a9e"/></svg></span>
    <span class="run"><svg viewBox="0 0 36 36"><use href="#chrome"/></svg><em>A</em></span>
  </div>
  <svg class="tray" viewBox="0 0 190 28"><g fill="none" stroke="#1f1f1f" stroke-width="1.800"><path d="M1 18l7.500-8L16 18"/><path d="M49 21h14a5 5 0 0 0 0-10 8 8 0 0 0-15 0 5 5 0 0 0 1 10z" fill="#bfc3c6"/><path d="M46 5l22 19"/><path d="M92 12a16 16 0 0 1 23 0M95.500 15.500a11 11 0 0 1 16 0M99.500 19a6 6 0 0 1 8 0"/><path d="M127 11h4l5-5v17l-5-5h-4zM140 11a5 5 0 0 1 0 7M143 8a10 10 0 0 1 0 13"/><path d="M146.500 6a13 13 0 0 1 0 17" stroke="#a9b4ba"/><rect x="165" y="7" width="19" height="14" rx="3"/><path d="M186.500 11.500v5" stroke-width="2.500"/></g><circle cx="103.500" cy="22" r="1.800" fill="#1f1f1f"/><rect x="167.500" y="9.500" width="9" height="9" fill="#1f1f1f"/></svg>
  <div class="clock">20.40<br>22/10/2024</div>
  <svg class="bell" viewBox="0 0 22 24"><path d="M10 3a6.500 6.500 0 0 0-6 7v6l-3 4h18l-2-3M7 20c1 3 5 3 6 0M8 10h5l-5 6h5M15 2h5l-5 5h5" fill="none" stroke="#1f1f1f" stroke-width="1.600"/></svg>
</footer>
</body>
</html>
```
FILE: styles.css
```css
* { box-sizing: border-box; }
body { margin: 0; width: 1920px; height: 1080px; overflow: hidden; display: flex; flex-direction: column; font-family: "Open Sans", "Noto Sans", sans-serif; letter-spacing: -0.02em; color: #252423; background: #f3f2f1; white-space: nowrap; }
svg { display: block; flex: none; }
h1, h2, h3, p, ul { margin: 0; padding: 0; font-weight: 400; }
i, em { font-style: normal; }
.defs { position: absolute; width: 0; height: 0; }

/* title bar */
.titlebar { height: 51px; flex: none; background: #3b3a39; display: flex; align-items: center; padding-left: 25px; color: #fff; font-size: 18px; }
.ico-save { width: 23px; height: 24px; }
.ico-undo { width: 22px; height: 24px; margin-left: 22px; }
.ico-redo { width: 22px; height: 24px; margin-left: 22px; }
.doc-name { width: 328px; margin-left: 14px; padding-top: 6px; letter-spacing: -0.018em; }
.caret { border: 6px solid transparent; border-top: 7px solid #fff; border-bottom: 0; margin-top: 4px; }
.top-search { width: 600px; height: 36px; margin: 1px 0 0 128px; border-radius: 3px; background: #d4d3d1; display: flex; align-items: center; padding-left: 26px; color: #20695b; font-size: 20px; }
.top-search svg { width: 24px; height: 24px; margin-right: 17px; }
.user { width: 368px; margin-left: 84px; padding-top: 2px; font-size: 17.500px; letter-spacing: -0.006em; }
.avatar { width: 30px; height: 30px; }
.wbtns { width: 150px; height: 18px; margin: 3px 0 0 47px; }

/* ribbon tabs */
.tabs { height: 47px; flex: none; background: #fafafa; display: flex; font-size: 20px; line-height: 49px; padding-left: 34px; }
.t-file { width: 88px; } .t-home { width: 104px; } .t-insert { width: 99px; } .t-modeling { width: 135px; letter-spacing: 0.008em; }
.t-view { width: 46px; margin-right: 46px; font-weight: 600; letter-spacing: -0.02em; color: #000; box-shadow: inset 0 -5px #117865; }
.t-optimize { width: 132px; letter-spacing: 0.002em; } .t-help { width: 66px; }
.ctx { background: #fff; color: #117865; font-weight: 600; text-align: center; letter-spacing: -0.03em; }
.ctx-format { width: 112px; margin-right: 6px; }
.ctx-drill { width: 150px; letter-spacing: -0.004em; }
.share { width: 125px; height: 36px; margin: 6px 9px 0 auto; border-radius: 5px; background: #117865; color: #fff; display: flex; align-items: center; font-size: 18px; padding-left: 9px; }
.share-ico { width: 24px; height: 24px; margin-right: 13px; }
.chev-s { width: 15px; height: 10px; margin-left: 6px; }

/* ribbon commands */
.ribbon { height: 67px; flex: none; background: #fafafa; display: flex; align-items: center; padding: 7px 9px 0 27px; font-size: 20px; box-shadow: 0 2px 5px rgba(0,0,0,.2); position: relative; color: #323130; }
.rb { display: flex; align-items: center; height: 48px; flex: none; }
.sep { border-right: 1px solid #c8c6c4; }
.i30 { width: 30px; height: 30px; } .i28 { width: 28px; height: 28px; }
.chev { width: 16px; height: 10px; margin: 2px 0 0 6px; color: #252423; }
.aa { font-size: 6px; fill: #fff; }
.rb-theme { width: 65px; } .rb-view { width: 85px; padding-left: 21px; } .rb-view .chev { margin-left: 7px; }
.rb-phone { width: 72px; padding-left: 26px; }
.phone-s { width: 20px; height: 29px; }
.cb { width: 30px; height: 30px; border: 1px solid #8a8886; background: #fff; margin-right: 13px; }
.rb-grid, .rb-lock, .rb-snap { line-height: 50px; }
.rb-grid { width: 174px; padding-left: 21px; letter-spacing: -0.015em; } .rb-lock { width: 187px; letter-spacing: 0.002em; } .rb-snap { width: 179px; letter-spacing: 0.006em; }
.rb-filters { width: 132px; height: 60px; margin-left: 6px; padding-left: 14px; border: 1px solid #323130; background: #ebebeb; gap: 17px; }
.rb-book { width: 195px; padding-left: 21px; gap: 11px; }
.rb-sel { width: 164px; gap: 14px; } .rb-perf { width: 271px; gap: 11px; } .rb-refresh { width: 63px; }
.rb-visuals { width: 179px; gap: 14px; color: #c2c0be; letter-spacing: -0.01em; }
.rb-more { width: 15px; height: 10px; margin: 38px 0 0 auto; color: #252423; }

/* work area */
.work { height: 808px; flex: none; display: flex; border-bottom: 1px solid #dcdad8; }
.rail { width: 61px; border-right: 1px solid #dcdad8; }
.rail-i { height: 60px; display: flex; align-items: center; justify-content: center; padding-left: 1px; }
.rail-i svg { width: 24px; height: 24px; }
.rail-i .w28 { width: 28px; height: 28px; }
.rail-i.on { height: 58px; border-left: 4px solid #117865; padding: 0 3px 0 0; }
.dax { font: 600 10.500px "Open Sans", sans-serif; fill: #605e5c; stroke: #f3f2f1; stroke-width: 3px; paint-order: stroke; }
.center { width: 1317px; display: flex; flex-direction: column; }
.stage { height: 754px; display: flex; }
.canvas { width: 1268px; height: 754px; background: linear-gradient(100deg, #fafafc 0, #fafafc 30%, #fcfafd 55%, #fcfbfd 100%); display: flex; flex-direction: column; }
.headline { height: 122px; text-align: center; padding-top: 23px; }
.headline h1 { font: 500 53px/72px Roboto, sans-serif; letter-spacing: -0.012em; }
.headline p { font-size: 15.500px; line-height: 12px; color: #706e6c; letter-spacing: -0.025em; }
h2 { font: 400 15px/20px Roboto, sans-serif; letter-spacing: 0.048em; color: #252423; }
.filters-row { height: 171px; display: flex; border-bottom: 1px solid #a99bd0; }
.slicer { padding: 0 5px; }
.slicer h2 { height: 24px; }
.selected { width: 375px; position: relative; }
.handles { position: absolute; left: 0; top: 0; width: 375px; height: 170px; }
.vhead { position: absolute; left: 257px; top: -37px; width: 117px; height: 35px; }
.month { width: 330px; } .year { width: 234px; }
.tiles { display: grid; gap: 8px; }
.tiles b { font: 400 13.500px Roboto, sans-serif; letter-spacing: 0.034em; background: #fff; border: 1px solid #b3b0ad; display: flex; align-items: center; padding-left: 12px; }
.tiles b.on { background: #252423; border-color: #252423; color: #fff; font-weight: 700; letter-spacing: 0.01em; }
.wil { grid-template-columns: repeat(3, 116px); grid-auto-rows: 66px; }
.mon { grid-template-columns: repeat(3, 97px); grid-auto-rows: 41.500px; }
.yr { grid-template-columns: repeat(3, 69.500px); grid-auto-rows: 66px; }
.month-row { display: flex; gap: 5px; }
.thumb { width: 8px; height: 110px; background: #d2d0ce; }
.kpi { width: 329px; padding-left: 5px; }
.kpi-v { font: 500 53px/52px Roboto, sans-serif; letter-spacing: -0.038em; color: #d64554; margin: 29px 0 0 92px; display: flex; align-items: center; }
.kpi-v small { font-size: 15px; margin: 0 0 4px 5px; font-weight: 400; }
.kpi p { font-size: 16px; line-height: 24px; width: 316px; text-align: center; letter-spacing: -0.034em; margin-top: -4px; }
.cards { height: 62px; padding: 5px 0 0 17px; display: grid; grid-template-columns: repeat(7, 178px); background: linear-gradient(#b3b0ad, #b3b0ad) 5px 5px / 2px 42px no-repeat; }
.cards div { display: flex; flex-direction: column; }
.cards b { font-weight: 400; font-size: 15.500px; line-height: 23px; letter-spacing: -0.03em; }
.cards span { font-size: 15.500px; line-height: 20px; color: #605e5c; letter-spacing: -0.012em; }
.bottom { height: 358px; display: flex; }
.area { width: 635px; height: 358px; background: linear-gradient(#8e78c4, #8e78c4) 100% 100% / 1px 356px no-repeat; }
.area h2 { padding: 4px 0 0 5px; height: 68px; line-height: 19px; }
.plot { width: 634px; height: 290px; }
.leg, .tick { font-size: 12.500px; fill: #605e5c; letter-spacing: 0; }
.axis { font: 400 14px Roboto, sans-serif; fill: #252423; letter-spacing: 0; }
.mapcol { width: 633px; padding-left: 5px; }
.mapcol h2 { padding-top: 3px; height: 30px; }
.maplegend { display: flex; align-items: center; height: 25px; padding-bottom: 3px; font-size: 13px; color: #605e5c; }
.maplegend b { width: 63px; font-weight: 700; letter-spacing: -0.03em; }
.maplegend i { width: 10px; height: 10px; border-radius: 50%; background: #ff977e; margin-right: 3px; }
.map { width: 624px; height: 298px; letter-spacing: 0; }
.thin path, path.thin { stroke-width: 1.200px; vector-effect: non-scaling-stroke; }
.mid path { stroke-width: 2px; vector-effect: non-scaling-stroke; }
.wide path { stroke-width: 3px; vector-effect: non-scaling-stroke; }
.city text { fill: #3d3d3d; font-weight: 500; stroke: #f6f5f2; stroke-width: 2px; stroke-opacity: .8; paint-order: stroke; }
.city .prov { fill: #8d8a88; font-size: 15px; font-weight: 400; }
.shield rect { fill: #5fa862; } .shield .red { fill: #df6f7b; }
.shield text { font-size: 9.500px; font-weight: 700; fill: #fff; text-anchor: middle; }
.bing { font-size: 9px; fill: #706e6c; stroke: #fff; stroke-width: 1.500px; paint-order: stroke; }
.credit { font: 10px "Liberation Sans", sans-serif; stroke: #fff; stroke-width: 1.500px; paint-order: stroke; }
.credit .lnk { fill: #2a4fc4; text-decoration: underline; }
.band { height: 41px; background: repeating-linear-gradient(90deg, #5b5c50 0 3px, transparent 3px 6px) 0 0 / 100% 3px no-repeat, linear-gradient(90deg, #4b4693 0, #4b4693 8%, #6f4dab 50%, #9a57c8 100%); }
.filterpane { width: 49px; background: #9055c0; border-left: 1px solid #a79cb5; border-right: 1px solid #e4e0e8; display: flex; flex-direction: column; align-items: center; color: #fff; }
.dl { width: 20px; height: 20px; margin: 19px 0 0 0; }
.fn { width: 20px; height: 20px; margin: 23px 0 0 4px; }
.filterpane span { writing-mode: vertical-rl; font-size: 19.500px; font-weight: 700; line-height: 26px; letter-spacing: 0.025em; margin-top: 10px; }

.pagebar { height: 53px; display: flex; }
.dev { margin: 8px 0 0 14px; width: 36px; height: 38px; border-bottom: 4px solid #117865; display: flex; justify-content: center; }
.dev svg { width: 30px; height: 24px; margin-top: 2px; }
.dev-phone { width: 40px; padding: 6px 0 0 39px; }
.phone-m { width: 20px; height: 31px; color: #605e5c; }
.arrows { width: 40px; height: 12px; margin: 20px 10px 0 51px; }
.ptab { width: 113.500px; text-align: center; font-size: 18px; line-height: 54px; background: #fff; border-left: 1px solid #c8c6c4; letter-spacing: -0.035em; }
.ptab.on { font-weight: 600; box-shadow: inset 0 -6px #117865; letter-spacing: -0.05em; }
.padd { width: 59.500px; background: #117865; display: flex; align-items: center; justify-content: center; }
.padd svg { width: 16px; height: 16px; margin-bottom: 3px; }

/* visualizations pane */
.viz { width: 271px; border-right: 1px solid #dcdad8; border-left: 1px solid #dcdad8; }
.viz header, .data header { display: flex; justify-content: space-between; align-items: center; height: 58px; padding: 0 10px 0 12px; }
h3 { font-size: 23px; font-weight: 600; letter-spacing: -0.014em; }
.dr { width: 20px; height: 20px; }
.build { padding-left: 12px; font-size: 18px; font-weight: 500; line-height: 20px; height: 28px; letter-spacing: -0.018em; }
.vtabs { display: flex; justify-content: space-between; padding: 0 10px 0 12px; }
.vt { width: 48px; height: 48px; }
.vt.mid-t { margin: 0 -3px 0 4px; }
.vt.on { background: #d0cecd; border-radius: 3px; }
.notch { width: 270px; height: 14px; margin-top: 6px; }
.vgrid { display: grid; grid-template-columns: repeat(6, 28px); grid-auto-rows: 28px; gap: 14px; padding: 16px 0 0 16px; height: 351px; }
.vgrid > svg { width: 28px; height: 28px; overflow: visible; }
.ax { fill: none; stroke: #3b3a39; stroke-width: 1.600px; } .ax.wf { fill: #fff; }
.w { fill: #fff; stroke: #605e5c; stroke-width: 1.500px; }
.b { fill: #83beec; stroke: #1267b4; stroke-width: 1.500px; } .thinb { stroke-width: .8px; }
.g { fill: #c8c6c4; stroke: #797775; stroke-width: 1.500px; }
.t123 { font-size: 12.500px; fill: #2285c8; letter-spacing: 0; }
.big { font-size: 24px; font-weight: 700; fill: #2285c8; letter-spacing: 0; }
.pick { width: 36px; height: 36px; margin: -4px; border: 1px solid #000; padding: 3px; }
.pick svg { width: 28px; height: 28px; }
.wells { height: 302px; border-top: 1px solid #dcdad8; display: flex; }
.well-list { width: 261px; height: 290px; overflow: hidden; padding-left: 6px; font-size: 17.500px; color: #3b3a39; letter-spacing: -0.012em; }
.well-list p { padding-left: 12px; height: 45px; line-height: 49px; }
.well { height: 42px; background: #fff; border: 1px dashed #c8c6c4; padding: 3px; }
.pill { height: 34px; background: #ebebea; border: 1px solid #b3b0ad; border-radius: 2px; display: flex; align-items: center; padding: 0 6px; line-height: 30px; }
.pill span { width: 194px; margin-top: -2px; }
.pd { width: 18px; height: 10px; margin-right: 9px; } .px { width: 12px; height: 12px; }
.well-list .tt { height: 48px; line-height: 56px; }
.well.add { line-height: 32px; padding-left: 15px; }
.well-list .drill { font-weight: 600; height: 47px; line-height: 57px; letter-spacing: -0.018em; color: #484644; }
.tog-row { height: 40px; display: flex; justify-content: space-between; padding: 0 24px 0 12px; line-height: 34px; }
.tog { width: 48px; height: 24px; margin-top: 5px; border-radius: 12px; color: #fff; font-size: 14px; line-height: 26px; padding-left: 7px; background: radial-gradient(circle at 35px 12px, #fff 5.700px, #117865 6.300px); }
.scroll { width: 8px; height: 232px; margin-top: 4px; border-radius: 4px; background: #d1d0ce; }

/* data pane */
.data { width: 271px; }
.data header { padding: 0 11px 0 13px; }
.dsearch { margin: 10px 6px 14px 7px; height: 36px; background: #fff; border: 1px solid #c8c6c4; border-bottom-color: #605e5c; border-radius: 5px; display: flex; align-items: center; font-size: 20px; line-height: 36px; color: #605e5c; padding: 1px 0 0 18px; }
.dsearch svg { width: 22px; height: 22px; margin-right: 10px; margin-top: -3px; }
.data ul { list-style: none; }
.data li { height: 36px; display: flex; align-items: center; padding-left: 25px; font-size: 17.500px; color: #3b3a39; position: relative; }
.cr { width: 10px; height: 18px; margin-right: 10px; } .sh { width: 18px; height: 18px; margin-right: 9px; }
.ok { position: absolute; left: 53px; top: 18px; width: 18px; height: 18px; }

/* status bar */
.status { height: 36px; flex: none; display: flex; align-items: center; padding: 1px 27px 0 6px; font-size: 18px; letter-spacing: -0.018em; color: #3b3a39; border-bottom: 2px solid #000; }
.zoom { width: 184px; height: 18px; margin: -1px 0 0 auto; }
.pct { margin: 0 28px 0 19px; width: 35px; color: #605e5c; letter-spacing: -0.04em; }
.fit { width: 24px; height: 18px; }

/* taskbar */
.taskbar { height: 71px; flex: none; display: flex; align-items: center; padding-bottom: 3px; background: linear-gradient(90deg, #dce3e6 0, #dde1ea 13%, #d5e8ee 25%, #d8eaf4 55%, #d9ecf2 85%, #e0e4ee 100%); border-top: 2px solid #b2bcc4; }
.weather { width: 398px; padding-left: 34px; }
.weather svg { width: 46px; height: 46px; margin-top: -6px; }
.deg { font-size: 15px; fill: #1f1f1f; letter-spacing: 0; }
.start { width: 35px; height: 35px; }
.tsearch { width: 328px; height: 46px; margin: 0 16px 0 21px; border-radius: 23px; background: #f3f8fb; border: 1px solid #c5d2d9; border-bottom: 2px solid #b5c4cc; display: flex; align-items: center; font-size: 19.500px; letter-spacing: -0.01em; color: #605e5c; padding-left: 15px; }
.tsearch svg { width: 24px; height: 24px; margin-right: 14px; }
.apps { display: flex; }
.apps span { width: 66px; height: 60px; display: flex; align-items: center; justify-content: center; position: relative; }
.apps span:first-child { width: 36px; }
.apps svg { width: 36px; height: 36px; }
.apps .act { width: 56px; height: 58px; margin: 0 5px 0 23px; background: #f0f6fa; border-radius: 6px; border: 1px solid #dfe8ed; }
.act::after { content: ""; position: absolute; bottom: 0; width: 24px; height: 4px; border-radius: 2px; background: #24808f; }
.run::after { content: ""; position: absolute; bottom: 0; width: 8px; height: 4px; border-radius: 2px; background: #7b8085; }
.run em { position: absolute; right: 7px; top: 5px; width: 24px; height: 24px; border-radius: 50%; background: #085044; color: #e0f0ec; font-size: 12px; font-weight: 600; line-height: 24px; text-align: center; }
.tray { width: 190px; height: 28px; margin-left: 103px; }
.clock { width: 116px; text-align: right; font-size: 17.500px; line-height: 24px; letter-spacing: -0.006em; color: #1f1f1f; }
.bell { width: 22px; height: 24px; margin-left: 12px; }
```
